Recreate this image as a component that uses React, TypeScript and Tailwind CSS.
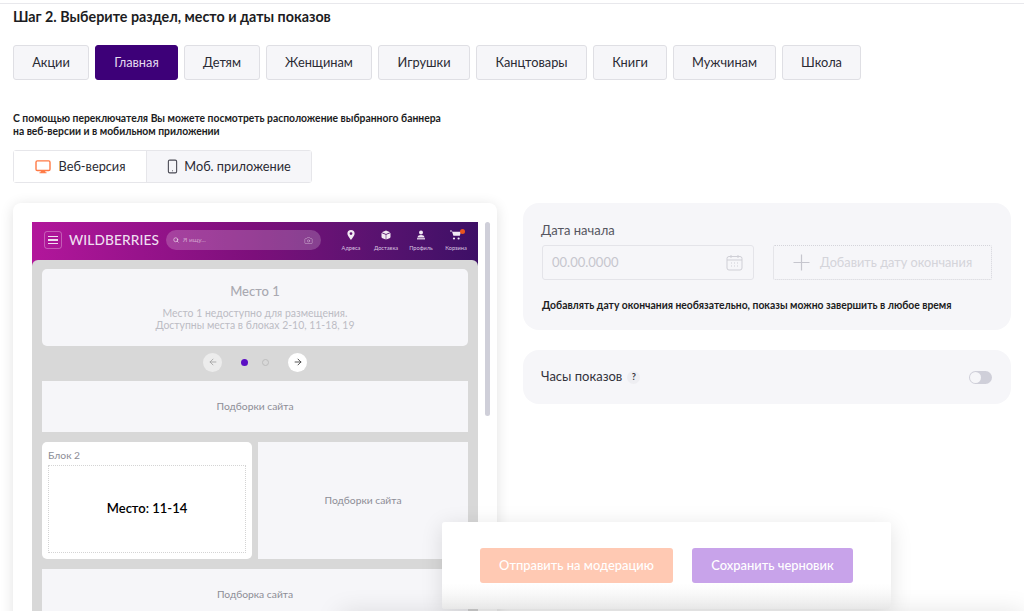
import { ArrowLeft, ArrowRight, Camera, Search } from 'lucide-react';

const tabs = [
  { label: 'Акции', width: 'w-[76px]' },
  { label: 'Главная', width: 'w-[83px]', active: true },
  { label: 'Детям', width: 'w-[76px]' },
  { label: 'Женщинам', width: 'w-[106px]' },
  { label: 'Игрушки', width: 'w-[92px]' },
  { label: 'Канцтовары', width: 'w-[111px]' },
  { label: 'Книги', width: 'w-[74px]' },
  { label: 'Мужчинам', width: 'w-[103px]' },
  { label: 'Школа', width: 'w-[79px]' },
];

function PinIcon() {
  return (
    <svg width="10" height="10" viewBox="0 0 10 10">
      <path fillRule="evenodd" fill="#f2eaf4" d="M5 0a3.6 3.6 0 0 1 3.6 3.6C8.6 6 5 10 5 10S1.4 6 1.4 3.6A3.6 3.6 0 0 1 5 0zm0 2.2a1.4 1.4 0 1 0 0 2.8 1.4 1.4 0 0 0 0-2.8z" />
    </svg>
  );
}

function BoxIcon() {
  return (
    <svg width="10" height="10" viewBox="0 0 10 10">
      <path fill="#f2eaf4" d="M5 .5l4.2 1.7L5 3.9.8 2.2z" />
      <path fill="#f2eaf4" d="M.5 3l4.2 1.7V9.5L1.5 8.2A1.5 1.5 0 0 1 .5 6.8zM9.5 3L5.3 4.7V9.5l3.2-1.3a1.5 1.5 0 0 0 1-1.4z" />
    </svg>
  );
}

function ProfileIcon() {
  return (
    <svg width="10" height="10" viewBox="0 0 10 10" fill="#f2eaf4">
      <circle cx="5" cy="2.4" r="2" />
      <path d="M1.4 7.6C1.6 5.8 3.2 5 5 5s3.4.8 3.6 2.6z" />
      <rect x="1" y="8.2" width="8" height="1.2" />
    </svg>
  );
}

function CartIcon() {
  return (
    <svg width="12" height="10" viewBox="0 0 12 10" fill="#f2eaf4">
      <path d="M0 .6h1.8l.6 1.2h8.6l-1.2 4H3.4L2 1.4H0z" />
      <circle cx="4" cy="8.5" r="1.1" />
      <circle cx="8.6" cy="8.5" r="1.1" />
    </svg>
  );
}

const headerLinks = [
  { label: 'Адреса', icon: <PinIcon /> },
  { label: 'Доставка', icon: <BoxIcon /> },
  { label: 'Профиль', icon: <ProfileIcon /> },
  { label: 'Корзина', icon: <CartIcon /> },
];

function MonitorIcon() {
  return (
    <svg width="16" height="14" viewBox="0 0 18 16" fill="none">
      <rect x="1" y="1" width="16" height="11" rx="1.5" stroke="#ff7a45" strokeWidth="1.6" />
      <path d="M5 14.5h8M7 12.5h4v2H7z" stroke="#ff7a45" strokeWidth="1.2" fill="#ff7a45" />
    </svg>
  );
}

function PhoneIcon() {
  return (
    <svg width="11" height="15" viewBox="0 0 12 16" fill="none">
      <rect x="1.5" y="1" width="9" height="14" rx="1.5" stroke="#4b4b55" strokeWidth="1.2" />
      <circle cx="6" cy="12.6" r="0.6" fill="#4b4b55" />
    </svg>
  );
}

function CalendarIcon() {
  return (
    <svg width="17" height="17" viewBox="0 0 17 17" fill="none" stroke="#cfcfd6" strokeWidth="1">
      <rect x="1" y="2.5" width="15" height="13.5" rx="2" />
      <path d="M1 6h15M5 1v3M12 1v3" />
      <path d="M5 9h1M8 9h1M11 9h1M5 12h1M8 12h1M11 12h1" />
    </svg>
  );
}

function SitePlaceholder({ label, className }: { label: string; className: string }) {
  return (
    <div className={`flex items-center justify-center bg-[#f6f6f9] text-[10.3px] text-[#8d8d96] ${className}`}>
      {label}
    </div>
  );
}

function SitePreview() {
  return (
    <div className="w-[446px] shrink-0 h-[389px]">
      <div className="h-[44px] bg-gradient-to-r from-[#b2169b] via-[#7c0f7b] to-[#3d0f66] flex items-start pl-3 pr-[10px] pt-[8px]">
        <div className="w-[18px] h-[18px] mt-[1px] rounded-[3px] border border-white/30 flex flex-col items-center justify-center gap-[2px]">
          <span className="w-[10px] h-[1.5px] bg-[#f0dcef]" />
          <span className="w-[10px] h-[1.5px] bg-[#f0dcef]" />
          <span className="w-[10px] h-[1.5px] bg-[#f0dcef]" />
        </div>
        <span className="ml-[7px] mt-[1px] text-[13.7px] leading-[18px] font-medium text-[#eedff0] tracking-[0.1px]">WILDBERRIES</span>
        <div className="ml-[7px] w-[155px] h-[20px] rounded-full bg-white/20 flex items-center pl-[7px] pr-[8px] gap-[4px]">
          <Search size={6} strokeWidth={3} className="text-white/70" />
          <span className="text-[6.5px] text-white/50 flex-1">Я ищу...</span>
          <Camera size={9} className="text-white/40" />
        </div>
        <div className="ml-auto flex gap-[11px]">
          {headerLinks.map((link) => (
            <div key={link.label} className="relative w-[24px] flex flex-col items-center text-[#d9c4e0]">
              {link.icon}
              <span className="mt-[4px] text-[5.6px] leading-[7px] whitespace-nowrap">{link.label}</span>
              {link.label === 'Корзина' && (
                <span className="absolute top-[-1px] right-[3px] w-[5px] h-[5px] rounded-full bg-[#e8541e]" />
              )}
            </div>
          ))}
        </div>
      </div>

      <div className="-mt-[6px] rounded-t-[6px] bg-[#d8d8d8] h-[400px] p-[10px] pt-[9px]">
        <div className="h-[77px] rounded-[5px] bg-[#f6f6f9] flex flex-col items-center pt-[14px]">
          <span className="text-[13px] leading-[17px] font-medium text-[#a9a9b1]">Место 1</span>
          <span className="mt-[7px] text-[10.45px] leading-[12px] text-[#bcbcc4]">Место 1 недоступно для размещения.</span>
          <span className="text-[10.45px] leading-[12px] text-[#bcbcc4]">Доступны места в блоках 2-10, 11-18, 19</span>
        </div>

        <div className="h-[35px] pb-[3px] flex items-center justify-center">
          <div className="w-[19px] h-[19px] rounded-full bg-[#ececec] flex items-center justify-center">
            <ArrowLeft size={10} className="text-[#a0a0a0]" />
          </div>
          <span className="ml-[19px] w-[7px] h-[7px] rounded-full bg-[#5b0fc4]" />
          <span className="ml-[14px] w-[7px] h-[7px] rounded-full border border-[#bdbdbd]" />
          <div className="ml-[19px] w-[19px] h-[19px] rounded-full bg-white flex items-center justify-center">
            <ArrowRight size={10} className="text-[#333]" />
          </div>
        </div>

        <SitePlaceholder label="Подборки сайта" className="h-[51px]" />

        <div className="mt-[10px] flex gap-[6px] h-[117px]">
          <div className="w-[210px] rounded-[5px] bg-white px-[6px] pt-[6px] pb-[6px] flex flex-col">
            <span className="text-[10.3px] leading-[14px] text-[#8d8d96]">Блок 2</span>
            <div className="mt-[3px] flex-1 border border-dotted border-[#d4d4d4] flex items-center justify-center text-[13px] font-semibold text-black">
              Место: 11-14
            </div>
          </div>
          <SitePlaceholder label="Подборки сайта" className="flex-1" />
        </div>

        <SitePlaceholder label="Подборка сайта" className="mt-[10px] h-[52px]" />
      </div>
    </div>
  );
}

export default function App() {
  return (
    <div className="relative h-[611px] overflow-hidden bg-white font-['Lato','Noto_Sans',sans-serif] text-[#1f1f26]">
      <div className="h-[4px] border-b border-[#e8e8ec]" />

      <div className="px-[13px]">
        <h1 className="mt-[4px] text-[14.3px] leading-[18px] font-bold text-[#1c1c22]">
          Шаг 2. Выберите раздел, место и даты показов
        </h1>

        <div className="mt-[19px] flex gap-[6px]">
          {tabs.map((tab) => (
            <button
              key={tab.label}
              className={`${tab.width} h-[35px] rounded-[3px] border text-[12.8px] ${
                tab.active
                  ? 'bg-[#3d0078] border-[#3d0078] text-[#e6dcf0]'
                  : 'bg-[#f6f6f9] border-[#dfdfe4] text-[#2a2a33]'
              }`}
            >
              {tab.label}
            </button>
          ))}
        </div>

        <p className="mt-[32px] text-[10.35px] leading-[13px] font-bold text-[#1c1c22]">
          С помощью переключателя Вы можете посмотреть расположение выбранного баннера
          <br />
          на веб-версии и в мобильном приложении
        </p>

        <div className="mt-[12px] flex w-[299px] h-[33px] rounded-[3px] border border-[#e6e6ea] text-[12.75px] text-[#2a2a33]">
          <div className="w-[132px] flex items-center justify-center gap-[8px] bg-white">
            <MonitorIcon />
            Веб-версия
          </div>
          <div className="flex-1 flex items-center justify-center gap-[6px] bg-[#f6f6f9] border-l border-[#e6e6ea]">
            <PhoneIcon />
            Моб. приложение
          </div>
        </div>

        <div className="mt-[20px] flex gap-[26px] items-start">
          <div className="w-[484px] shrink-0 h-[500px] rounded-[8px] bg-white shadow-[0_2px_14px_rgba(0,0,0,0.12)] pl-[19px] pt-[19px] flex gap-[7px]">
            <SitePreview />
            <div className="w-[5px] h-[194px] rounded-full bg-[#cfcfd9]" />
          </div>

          <div className="w-[488px] flex flex-col gap-[20px]">
            <div className="h-[127px] rounded-[16px] bg-[#f6f6f9] px-[19px] pt-[19px]">
              <span className="block -ml-[1px] text-[13px] leading-[16px] text-[#55555f]">Дата начала</span>
              <div className="mt-[7px] flex gap-[19px]">
                <div className="w-[212px] h-[35px] rounded-[3px] border border-[#e4e4e9] flex items-center justify-between pl-[9px] pr-[10px]">
                  <span className="text-[13px] text-[#c6c6ce]">00.00.0000</span>
                  <CalendarIcon />
                </div>
                <div className="flex-1 h-[35px] rounded-[2px] border border-dotted border-[#d4d4da] flex items-center pl-[19px] gap-[10px]">
                  <svg width="17" height="17" viewBox="0 0 17 17" stroke="#c6c6ce" strokeWidth="1.2">
                    <path d="M8.5 0.5v16M0.5 8.5h16" />
                  </svg>
                  <span className="text-[12.75px] text-[#d4d4da]">Добавить дату окончания</span>
                </div>
              </div>
              <p className="mt-[19px] text-[10.35px] leading-[13px] font-bold text-[#1c1c22]">
                Добавлять дату окончания необязательно, показы можно завершить в любое время
              </p>
            </div>

            <div className="h-[54px] rounded-[16px] bg-[#f6f6f9] pl-[18px] pr-[19px] flex items-center">
              <span className="text-[13px] text-[#33333c]">Часы показов</span>
              <span className="ml-[5px] w-[13px] h-[13px] rounded-full bg-[#eeeef2] flex items-center justify-center text-[9px] font-bold text-[#33333c]">?</span>
              <div className="ml-auto w-[23px] h-[13px] rounded-full bg-[#cfcfd9] p-[1px]">
                <div className="w-[11px] h-[11px] rounded-full bg-[#f6f6f9]" />
              </div>
            </div>
          </div>
        </div>
      </div>

      <div className="absolute left-[442px] top-[522px] w-[449px] h-[87px] rounded-[3px] bg-gradient-to-b from-white from-70% to-[#f2f2f2] shadow-[0_4px_22px_rgba(0,0,0,0.12)] flex items-start gap-[19px] pl-[38px] pt-[26px] text-[12.9px] font-medium text-white">
        <button className="w-[193px] h-[35px] rounded-[3px] bg-[#ffc9b3]">Отправить на модерацию</button>
        <button className="w-[161px] h-[35px] rounded-[3px] bg-[#c8a3ea]">Сохранить черновик</button>
      </div>
      <div className="absolute left-[340px] right-0 top-[616px] h-[10px] shadow-[0_0_26px_rgba(0,0,0,0.22)]" />
    </div>
  );
}
